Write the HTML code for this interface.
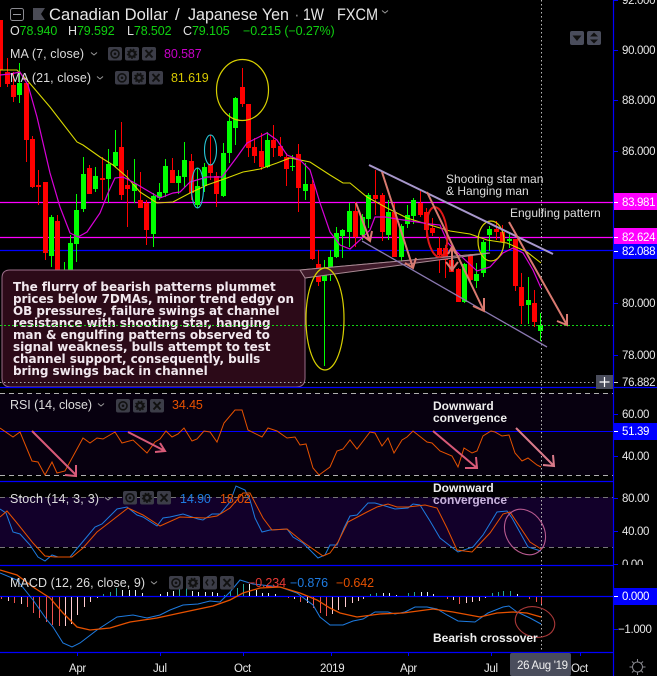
<!DOCTYPE html>
<html><head><meta charset="utf-8"><title>CAD/JPY</title>
<style>
html,body{margin:0;padding:0;background:#000;width:657px;height:676px;overflow:hidden}
svg{display:block}
text{font-family:"Liberation Sans",sans-serif;font-size:12px}
.ax{font-size:11.5px;fill:#e6e6e6;letter-spacing:-.33px}
.box text{font-family:"DejaVu Sans","Liberation Sans",sans-serif;font-size:12px;font-weight:bold;fill:#f1e8ee;letter-spacing:-.07px}
.b{font-weight:bold;fill:#eee;font-size:12px}
.t{font-size:17px;fill:#e6e6e6}
.l{font-size:12.5px;fill:#dcdcdc;letter-spacing:-.1px}
</style></head><body>
<svg width="657" height="676" viewBox="0 0 657 676" xmlns="http://www.w3.org/2000/svg">
<defs>
<g id="e">
<rect x="0" y="0" width="14" height="13.5" rx="2" fill="#3c3d48"/><circle cx="7" cy="6.8" r="4" fill="none" stroke="#111" stroke-width="1.6"/><circle cx="7" cy="6.8" r="1.3" fill="#111"/>
<rect x="17" y="0" width="14" height="13.5" rx="2" fill="#3c3d48"/><circle cx="24" cy="6.8" r="3" fill="none" stroke="#111" stroke-width="2.4"/><circle cx="24" cy="6.8" r="4.6" fill="none" stroke="#111" stroke-width="1.2" stroke-dasharray="1.6 1.6"/>
</g>
<g id="x"><rect x="0" y="0" width="14" height="13.5" rx="2" fill="#3c3d48"/><path d="M3.500 3L10.500 10.500M10.500 3L3.500 10.500" stroke="#111" stroke-width="2"/></g>
</defs>
<rect width="657" height="676" fill="#000"/>
<rect x="0" y="393" width="613" height="82" fill="#07000f"/>
<rect x="0" y="497" width="613" height="50" fill="#12002a"/>
<path d="M0 202.500H613M0 237.500H613" stroke="#ff00ff" stroke-width="1.2"/>
<path d="M0 250.500H613" stroke="#0000ff" stroke-width="1.2"/>
<g shape-rendering="crispEdges" fill="none">
<path stroke="#ff0000" stroke-width="1" d="M0.500 20V87M7.500 58V87M13.500 72V102M26.500 83V162M32.500 136V188M38.500 170V205M45.500 182V260M57.500 215V287M89.500 165V194M102.500 157V200M121.500 122V200M127.500 170V227M140.500 172V208M146.500 200V245M172.500 158V183M191.500 154V200M210.500 135V180M216.500 172V207M242.500 68V107M248.500 104V157M254.500 138V163M261.500 133V170M273.500 125V157M280.500 137V157M286.500 153V186M298.500 144V212M312.500 180V260M318.500 250V286M355.500 202V247M375.500 170V215M382.500 193V241M394.500 203V257M420.500 191V217M426.500 208V238M432.500 218V236M439.500 237V273M445.500 245V278M451.500 247V272M458.500 268V302M470.500 254V281M496.500 221V240M502.500 225V243M515.500 239V291M521.500 273V324M534.500 290V327"/>
<path stroke="#00ff00" stroke-width="1" d="M19.500 63V103M51.500 215V267M64.500 262V298M70.500 235V290M76.500 194V262M83.500 157V212M95.500 167V192M108.500 149V203M115.500 130V167M134.500 159V203M153.500 193V247M159.500 183V200M165.500 159V197M178.500 170V194M184.500 142V187M197.500 168V208M204.500 163V192M223.500 143V197M229.500 113V163M235.500 97V145M267.500 132V168M292.500 155V171M305.500 163V200M324.500 260V366M330.500 250V281M336.500 227V258M342.500 229V258M349.500 203V247M362.500 214V240M368.500 193V228M388.500 200V240M401.500 224V262M407.500 205V228M413.500 198V224M464.500 263V303M476.500 263V288M483.500 240V277M489.500 226V251M509.500 234V248M528.500 277V324M540.500 313V341"/>
<path stroke="#ff0000" stroke-width="5" d="M0.500 20V70M7.500 72V84M13.500 85V97M26.500 83V140M32.500 139V187M38.500 185V187M45.500 182V253M57.500 221V282M89.500 168V194M102.500 178V180M121.500 147V195M127.500 185V189M140.500 200V208M146.500 203V230M172.500 170V183M191.500 161V193M210.500 164V173M216.500 176V194M242.500 87V104M248.500 104V148M254.500 147V156M261.500 151V167M273.500 140V148M280.500 146V156M286.500 157V169M298.500 154V188M312.500 184V259M318.500 264V282M355.500 211V237M375.500 195V199M382.500 195V232M394.500 212V257M420.500 203V215M426.500 212V230M432.500 228V233M439.500 248V255M445.500 248V260M451.500 260V272M458.500 269V302M470.500 255V280M496.500 229V232M502.500 232V242M515.500 239V286M521.500 287V306M534.500 303V322"/>
<path stroke="#00ff00" stroke-width="5" d="M19.500 83V95M51.500 217V256M64.500 272V282M70.500 243V274M76.500 210V244M83.500 174V209M95.500 176V189M108.500 164V179M115.500 152V166M134.500 184V191M153.500 196V234M159.500 192V198M165.500 166V193M178.500 176V183M184.500 160V177M197.500 186V205M204.500 167V186M223.500 153V196M229.500 121V153M235.500 98V128M267.500 140V167M292.500 166V167M305.500 184V191M324.500 274V281M330.500 257V274M336.500 233V257M342.500 230V236M349.500 211V232M362.500 217V235M368.500 195V219M388.500 212V235M401.500 226V257M407.500 215V224M413.500 200V216M464.500 264V302M476.500 274V281M483.500 242V273M489.500 229V235M509.500 239V241M528.500 300V305M540.500 325V331"/>
</g>
<path fill="none" stroke="#d8d800" stroke-width="1.100" d="M0 70L17 70L27 80L50 107L77 142L83 145L100 157L113 165L127 177L140 192L157 203L173 202L190 193L207 185L227 178L243 172L260 169L277 163L290 158L310 162L330 175L343 183L350 183L367 197L387 208L407 218L430 225L450 231L470 234L487 240L507 243L527 252L541 263"/>
<path fill="none" stroke="#d800d8" stroke-width="1.200" d="M0 75L10 74L20 72L28 85L37 117L50 173L60 207L70 233L78 237L87 232L100 213L108 193L115 178L123 177L133 182L143 188L160 198L173 193L180 192L190 182L207 177L222 177L237 157L247 143L257 138L267 133L277 140L287 155L300 160L310 170L320 203L330 232L340 245L350 249L360 240L370 230L375 217L385 217L397 219L417 222L430 224L440 225L448 243L463 258L477 271L490 267L503 253L513 248L523 253L533 270L541 288"/>
<g class="box">
<path d="M10 270H300L490 253L443 258L305 278V378Q305 387 296 387H11Q2 387 2 378V278Q2 270 10 270Z" fill="#2c0a18" stroke="#9a6c88" stroke-width="1"/>
<path d="M300 270L490 253L305 278Z" fill="#3f1a2a" stroke="#a98a94" stroke-width="1"/>
<rect x="3" y="279" width="301" height="100" fill="#2c0a18"/>
<text x="13" y="291">The flurry of bearish patterns plummet</text>
<text x="13" y="303">prices below 7DMAs, minor trend edgy on</text>
<text x="13" y="315">OB pressures, failure swings at channel</text>
<text x="13" y="327">resistance with shooting star, hanging</text>
<text x="13" y="339">man &amp; engulfing patterns observed to</text>
<text x="13" y="351">signal weakness, bulls attempt to test</text>
<text x="13" y="363">channel support, consequently, bulls</text>
<text x="13" y="375">bring swings back in channel</text>
</g>
<path d="M0 325.500H613" stroke="#14d414" stroke-width="1" stroke-dasharray="2 2"/>
<path d="M0 382.500H613" stroke="#aaa" stroke-width="1" stroke-dasharray="1.500 2.500"/>
<path d="M541.500 0V652" stroke="#bbb" stroke-width="1" stroke-dasharray="1.500 2.500"/>
<g fill="none">
<ellipse cx="242.500" cy="90" rx="26" ry="30.500" stroke="#d8d000" stroke-width="1.200"/>
<ellipse cx="210.500" cy="150" rx="6" ry="15" stroke="#27c7d8" stroke-width="1.100"/>
<ellipse cx="197.500" cy="188" rx="6" ry="20" stroke="#27c7d8" stroke-width="1.100"/>
<ellipse cx="325" cy="319" rx="19" ry="51" stroke="#d8d000" stroke-width="1.200"/>
<ellipse cx="437" cy="232" rx="10" ry="25" stroke="#e01818" stroke-width="2" transform="rotate(-6 437 232)"/>
<ellipse cx="491" cy="241" rx="13" ry="20" stroke="#d8d000" stroke-width="1.200"/>
</g>
<path d="M369 165L553 254" stroke="#a898cc" stroke-width="2" fill="none"/>
<path d="M362 241L547 347" stroke="#8a78b0" stroke-width="1.300" fill="none"/>
<g fill="none" stroke="#d97a70" stroke-width="2">
<path d="M382 172L413 268M405 263L413 268L416 258"/>
<path d="M356 203L370 241M362 235L370 241L372 231"/>
<path d="M427 192L484 311M473 306L484 311L484 298"/>
<path d="M452 247V270M448 254L452 247L456 254M446 262L452 270L458 262"/>
<path d="M509 222L567 325M557 321L567 325L567 314"/>
</g>
<text x="446" y="183" fill="#ddd">Shooting star man</text>
<text x="446" y="195" fill="#ddd">&amp; Hanging man</text>
<text x="510" y="217" fill="#ddd">Engulfing pattern</text>
<path d="M0 387.500H657M0 481.500H613M0 565.500H613M0 652.500H613" stroke="#0000ff" stroke-width="1.200"/>
<path d="M0 393.500H613M0 475.500H613" stroke="#b0b0b0" stroke-width="1" stroke-dasharray="5 4"/>
<path d="M0 497.500H613M0 547.500H613" stroke="#777" stroke-width="1" stroke-dasharray="5 4"/>
<path d="M0 431.500H613" stroke="#0000ff" stroke-width="1"/>
<path d="M0 596.500H613" stroke="#0000ff" stroke-width="1.200"/>
<path fill="none" stroke="#e65100" stroke-width="1" d="M0 428L13 437L20 432L32 461L38 462L45 475L52 462L57 473L65 471L83 438L90 443L97 438L103 439L115 432L122 443L133 440L147 453L155 442L160 439L166 431L172 437L178 434L184 428L192 441L197 439L204 431L210 432L217 442L224 423L235 410L242 410L248 430L262 437L268 428L277 431L287 438L295 437L300 445L306 444L313 468L319 475L330 467L337 451L343 449L350 440L357 449L370 432L375 433L382 446L388 438L394 453L402 440L407 437L413 431L427 442L432 443L440 451L452 456L458 467L464 448L472 453L477 451L483 436L491 431L495 432L502 436L509 435L515 453L522 461L528 458L537 465L541 467"/>
<g fill="none" stroke="#d85a78" stroke-width="2">
<path d="M32 431L76 475M65 475L76 476L76 465"/>
<path d="M128 432L165 451M155 452L165 451L160 443"/>
<path d="M433 431L477 468M465 468L477 468L476 457"/>
</g>
<path d="M516 428L554 466M543 465L554 466L553 455" fill="none" stroke="#d97a8a" stroke-width="2"/>
<text x="433" y="410" class="b">Downward</text>
<text x="433" y="422" class="b">convergence</text>
<path fill="none" stroke="#1e7be0" stroke-width="1" d="M0 509L6 513L13 532L20 534L30 545L38 557L45 561L52 555L58 557L70 557L80 545L95 527L102 524L117 509L127 507L137 515L143 517L157 526L163 518L170 517L183 514L198 519L203 520L212 514L220 514L230 502L236 486L245 490L250 500L255 518L262 532L270 530L287 529L293 537L303 543L318 558L325 555L330 545L337 545L344 528L350 516L357 515L368 503L375 503L382 505L395 509L408 508L413 504L420 505L430 521L440 538L458 552L473 547L483 535L497 512L507 511L512 518L528 547L541 551"/>
<path fill="none" stroke="#e65100" stroke-width="1" d="M0 517L7 511L17 523L33 543L45 556L55 557L72 557L83 548L97 532L110 522L128 508L143 515L160 526L180 517L205 518L217 516L230 508L243 493L250 493L263 518L272 530L287 529L303 542L323 556L330 553L338 542L348 522L367 512L377 507L388 504L397 507L408 507L425 505L437 508L447 528L457 550L472 552L490 533L503 514L510 512L530 542L541 549"/>
<ellipse cx="525" cy="532" rx="19" ry="24" transform="rotate(-32 525 532)" fill="none" stroke="#b85a90" stroke-width="1.100"/>
<text x="433" y="492" class="b">Downward</text>
<text x="433" y="504" class="b" style="fill:#c9b3dd">convergence</text>
<g shape-rendering="crispEdges" stroke-width="1" fill="none">
<path stroke="#ef5350" d="M1.500 597V599M14.500 597V603M27.500 597V607M33.500 597V613M39.500 597V618M46.500 597V622M52.500 597V625M59.500 597V626M288.500 597V598M300.500 597V602M313.500 597V608M320.500 597V613M326.500 597V616M447.500 597V599M459.500 597V604M529.500 597V599M536.500 597V602M541.500 597V604"/>
<path stroke="#ffcdd2" d="M8.500 597V601M21.500 597V604M65.500 597V626M71.500 597V624M77.500 597V615M84.500 597V607M90.500 597V602M97.500 597V598M294.500 597V599M307.500 597V603M332.500 597V614M338.500 597V610M345.500 597V607M352.500 597V603M358.500 597V601M363.500 597V599M453.500 597V600M466.500 597V603M472.500 597V602M479.500 597V601M485.500 597V598"/>
<path stroke="#26a69a" d="M103.500 596V594M110.500 596V592M116.500 596V588M179.500 596V589M186.500 596V588M224.500 596V595M230.500 596V592M237.500 596V588M243.500 596V584M370.500 596V594M376.500 596V593M408.500 596V593M414.500 596V592M492.500 596V593M498.500 596V592M503.500 596V591M510.500 596V591"/>
<path stroke="#e8f4f2" d="M122.500 596V590M129.500 596V590M135.500 596V590M142.500 596V593M160.500 596V594M167.500 596V592M173.500 596V591M192.500 596V591M198.500 596V592M205.500 596V592M212.500 596V592M217.500 596V593M249.500 596V584M256.500 596V590M262.500 596V593M268.500 596V593M275.500 596V594M383.500 596V593M389.500 596V593M396.500 596V595M421.500 596V592M427.500 596V592M433.500 596V594M517.500 596V594"/>
</g>
<path fill="none" stroke="#1e7be0" stroke-width="1" d="M0 573L17 580L33 600L47 620L53 627L63 643L72 647L80 643L97 630L117 617L133 615L147 618L160 615L170 610L183 605L198 604L210 601L220 602L230 592L240 580L253 584L280 587L297 593L313 605L320 617L330 625L343 625L353 621L363 619L375 612L388 612L395 614L405 612L415 607L427 607L437 609L447 615L458 621L475 622L488 613L503 607L509 606L517 612L530 618L541 624"/>
<path fill="none" stroke="#e65100" stroke-width="1.300" d="M0 570L17 575L33 587L50 598L63 613L77 627L90 630L110 628L130 622L157 618L180 613L213 606L230 600L243 593L260 588L280 587L300 593L317 600L330 608L340 613L357 617L380 614L403 613L433 609L453 612L480 617L497 613L513 612L527 613L541 617"/>
<ellipse cx="535" cy="622" rx="20" ry="15" transform="rotate(15 535 622)" fill="none" stroke="#a83838" stroke-width="1.100"/>
<text x="433" y="642" class="b">Bearish crossover</text>
<text class="ax" x="622" y="4">92.000</text>
<text class="ax" x="622" y="54">90.000</text>
<text class="ax" x="622" y="104">88.000</text>
<text class="ax" x="622" y="155">86.000</text>
<text class="ax" x="622" y="307">80.000</text>
<text class="ax" x="622" y="359">78.000</text>
<text class="ax" x="622" y="418">60.00</text>
<text class="ax" x="622" y="460">40.00</text>
<text class="ax" x="622" y="502">80.00</text>
<text class="ax" x="622" y="535">40.00</text>
<text class="ax" x="622" y="568">0.00</text>
<rect x="614" y="565" width="43" height="8" fill="#000"/>
<text class="ax" x="618" y="633">−1.000</text>
<path d="M613.500 0V676" stroke="#0000ff" stroke-width="1.200"/>
<path d="M613 0.500h5M613 50.500h5M613 100.500h5M613 151.500h5M613 303.500h5M613 355.500h5M613 414.500h5M613 456.500h5M613 498.500h5M613 531.500h5M613 564.500h5M613 629.500h5" stroke="#0000ff" stroke-width="1"/>
<rect x="614" y="193" width="43" height="17" fill="#ff00ff"/>
<rect x="614" y="228" width="43" height="17" fill="#ff00ff"/>
<rect x="614" y="244" width="43" height="15" fill="#0000ff"/>
<rect x="614" y="423" width="43" height="17" fill="#0000ff"/>
<rect x="614" y="588" width="43" height="17" fill="#0000ff"/>
<path d="M614 202.500h4M614 237.500h4M614 251.500h4M614 431.500h4M614 596.500h4" stroke="#fff" stroke-width="1"/>
<text class="ax" x="622" y="206" style="fill:#fff">83.981</text>
<text class="ax" x="622" y="241" style="fill:#fff">82.624</text>
<text class="ax" x="622" y="255" style="fill:#fff">82.088</text>
<text class="ax" x="622" y="435" style="fill:#fff">51.39</text>
<text class="ax" x="622" y="600" style="fill:#fff">0.000</text>
<rect x="596" y="375" width="17" height="14" fill="#4a4d5c"/>
<path d="M599.500 382h10M604.500 377v10" stroke="#fff" stroke-width="1.200"/>
<path d="M614 382.500h4" stroke="#ccc"/>
<text class="ax" x="622" y="386">76.882</text>
<path d="M77.500 652v4M160.500 652v4M243.500 652v4M331.500 652v4M408.500 652v4M491.500 652v4M580.500 652v4" stroke="#0000ff"/>
<text class="ax" x="69" y="672">Apr</text>
<text class="ax" x="153" y="672">Jul</text>
<text class="ax" x="234" y="672">Oct</text>
<text class="ax" x="320" y="672">2019</text>
<text class="ax" x="400" y="672">Apr</text>
<text class="ax" x="484" y="672">Jul</text>
<text class="ax" x="571" y="672">Oct</text>
<rect x="510" y="653" width="61" height="23" rx="2" fill="#4a4d5c"/>
<text class="ax" x="517" y="669" style="fill:#eee">26 Aug '19</text>
<g fill="none" stroke="#8a8a90" stroke-width="1"><circle cx="637.500" cy="667" r="5"/><path d="M637.500 659v3M637.500 672v3M629.500 667h3M642.500 667h3M632 661.500l2 2M641 670.500l2 2M643 661.500l-2 2M634 670.500l-2 2"/></g>
<rect x="10.500" y="8.500" width="13" height="12" rx="2" fill="none" stroke="#8a8a90"/>
<path d="M13 14.500h8" stroke="#9a9aa0"/>
<path d="M33 8H45L41 14L45 20H33Z" fill="#4a4b55"/>
<text x="49" y="20" class="t" textLength="119" lengthAdjust="spacingAndGlyphs">Canadian Dollar</text>
<text x="175" y="20" class="t">/</text>
<text x="188" y="20" class="t" textLength="101" lengthAdjust="spacingAndGlyphs">Japanese Yen</text>
<text x="294" y="20" class="t" style="fill:#777">·</text>
<text x="303" y="20" class="t" textLength="21" lengthAdjust="spacingAndGlyphs">1W</text>
<text x="337" y="20" class="t" textLength="41" lengthAdjust="spacingAndGlyphs">FXCM</text>
<path d="M382 10.500l3 2.500 3-2.500" fill="none" stroke="#999"/>
<text x="10" y="35" class="l" style="fill:#e0e0e0">O<tspan fill="#10d010">78.940</tspan></text>
<text x="68" y="35" class="l" style="fill:#e0e0e0">H<tspan fill="#10d010">79.592</tspan></text>
<text x="127" y="35" class="l" style="fill:#e0e0e0">L<tspan fill="#10d010">78.502</tspan></text>
<text x="183" y="35" class="l" style="fill:#e0e0e0">C<tspan fill="#10d010">79.105</tspan></text>
<text x="243" y="35" class="l" style="fill:#10d010">−0.215 (−0.27%)</text>
<text x="10" y="58" class="l" textLength="74">MA (7, close)</text>
<path d="M91 52.500l3 2.500 3-2.500" fill="none" stroke="#999"/>
<use href="#e" x="108" y="47"/><use href="#x" x="142" y="47"/>
<text x="164" y="58" class="l" style="fill:#c800c8">80.587</text>
<text x="10" y="82" class="l" textLength="81">MA (21, close)</text>
<path d="M97 76.500l3 2.500 3-2.500" fill="none" stroke="#999"/>
<use href="#e" x="115" y="71"/><use href="#x" x="149" y="71"/>
<text x="171" y="82" class="l" style="fill:#d8c800">81.619</text>
<text x="10" y="409" class="l" textLength="82">RSI (14, close)</text>
<path d="M98 403.500l3 2.500 3-2.500" fill="none" stroke="#999"/>
<use href="#e" x="116" y="399"/><use href="#x" x="150" y="399"/>
<text x="172" y="409" class="l" style="fill:#e65100">34.45</text>
<text x="10" y="503" class="l" textLength="89">Stoch (14, 3, 3)</text>
<path d="M105 497.500l3 2.500 3-2.500" fill="none" stroke="#999"/>
<use href="#e" x="123" y="491"/><use href="#x" x="157" y="491"/>
<text x="180" y="503" class="l" style="fill:#1e7be0">14.90</text>
<text x="220" y="503" class="l" style="fill:#e65100">18.02</text>
<text x="10" y="587" class="l" textLength="135">MACD (12, 26, close, 9)</text>
<path d="M151 581.500l3 2.500 3-2.500" fill="none" stroke="#999"/>
<use href="#e" x="169" y="576"/>
<rect x="203" y="576" width="14" height="13.500" rx="2" fill="#3c3d48"/><path d="M208 579.500l-2 3 2 3M212 579.500l2 3-2 3" fill="none" stroke="#111" stroke-width="1.500"/>
<use href="#x" x="220" y="576"/>
<text x="248" y="587" class="l" style="fill:#e53935">−0.234</text>
<text x="290" y="587" class="l" style="fill:#1e7be0">−0.876</text>
<text x="336" y="587" class="l" style="fill:#e65100">−0.642</text>
<rect x="570" y="31" width="14" height="14" rx="2" fill="#4a4d5c"/><path d="M572.500 35.500h9l-4.500 5.500z" fill="#111"/>
<rect x="587" y="31" width="14" height="14" rx="2" fill="#4a4d5c"/><path d="M590 36.500l4-4 4 4zM590 39.500l4 4 4-4z" fill="#111"/>
</svg>
</body></html>
